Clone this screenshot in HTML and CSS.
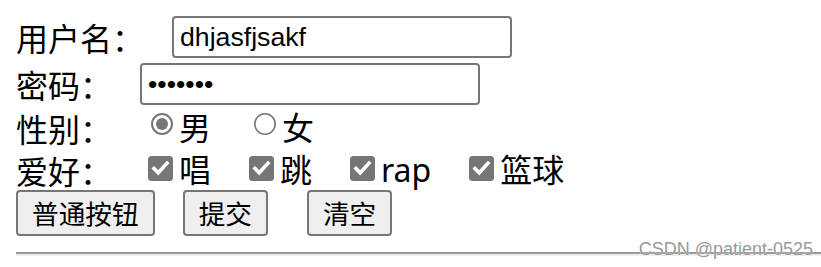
FILE: index.html
```
<!DOCTYPE html>
<html lang="zh-CN">
<head>
<meta charset="utf-8">
<title>表单</title>
<link rel="stylesheet" href="styles.css">
</head>
<body>
<form class="form">
  <div class="row">
    <span class="label">用户名：</span>
    <input class="text-input" type="text" value="dhjasfjsakf">
  </div>
  <div class="row row-pwd">
    <span class="label">密码：</span>
    <input class="text-input" type="password" value="1234567">
  </div>
  <div class="row row-radio">
    <span class="label">性别：</span>
    <label class="choice">
      <svg class="radio" viewBox="0 0 22 22" width="22" height="22"><circle cx="11" cy="11" r="10" fill="#fff" stroke="#767676" stroke-width="2"/><circle cx="11" cy="11" r="6" fill="#767676"/></svg>男
    </label>
    <label class="choice choice-next">
      <svg class="radio" viewBox="0 0 22 22" width="22" height="22"><circle cx="11" cy="11" r="10.2" fill="#fff" stroke="#767676" stroke-width="1.6"/></svg>女
    </label>
  </div>
  <div class="row row-check">
    <span class="label">爱好：</span>
    <label class="choice">
      <svg class="check" viewBox="0 0 25 25" width="25" height="25"><rect x="0" y="0" width="25" height="25" rx="3.5" fill="#767676"/><path d="M6 12.5 L10.2 16.8 L19 7.2" fill="none" stroke="#fff" stroke-width="3.6" stroke-linecap="square"/></svg>唱
    </label>
    <label class="choice choice-gap">
      <svg class="check" viewBox="0 0 25 25" width="25" height="25"><rect x="0" y="0" width="25" height="25" rx="3.5" fill="#767676"/><path d="M6 12.5 L10.2 16.8 L19 7.2" fill="none" stroke="#fff" stroke-width="3.6" stroke-linecap="square"/></svg>跳
    </label>
    <label class="choice choice-gap">
      <svg class="check" viewBox="0 0 25 25" width="25" height="25"><rect x="0" y="0" width="25" height="25" rx="3.5" fill="#767676"/><path d="M6 12.5 L10.2 16.8 L19 7.2" fill="none" stroke="#fff" stroke-width="3.6" stroke-linecap="square"/></svg>rap
    </label>
    <label class="choice choice-gap">
      <svg class="check" viewBox="0 0 25 25" width="25" height="25"><rect x="0" y="0" width="25" height="25" rx="3.5" fill="#767676"/><path d="M6 12.5 L10.2 16.8 L19 7.2" fill="none" stroke="#fff" stroke-width="3.6" stroke-linecap="square"/></svg>篮球
    </label>
  </div>
  <div class="row row-buttons">
    <button class="btn" type="button">普通按钮</button>
    <button class="btn btn-submit" type="button">提交</button>
    <button class="btn btn-reset" type="button">清空</button>
  </div>
</form>
<hr class="rule">
<div class="watermark">CSDN @patient-0525</div>
</body>
</html>
```
FILE: styles.css
```
html, body {
  background: #fff;
}
body {
  margin: 0;
  padding: 16px 0 0 16px;
  position: relative;
  font-family: "Noto Sans", "Noto Sans CJK SC", sans-serif;
  font-size: 32px;
  color: #000;
  height: 267px;
  box-sizing: border-box;
  overflow: hidden;
}
.form {
  margin: 0;
}
.row {
  display: flex;
  align-items: center;
  height: 42px;
  white-space: nowrap;
}
.label {
  font-family: "Noto Sans CJK SC", sans-serif;
  line-height: 42px;
  margin-right: 28px;
}
.row-pwd {
  margin-top: 5px;
}
.row-radio {
  margin-top: 2px;
}
.row-check {
  height: 41px;
}
.text-input {
  box-sizing: border-box;
  width: 340px;
  height: 42px;
  margin: 0;
  padding: 0 6px;
  border: 2px solid #767676;
  border-radius: 4px;
  background: #fff;
  color: #000;
  font-family: "Liberation Sans", sans-serif;
  font-size: 26.67px;
  outline: none;
}
.choice {
  display: flex;
  align-items: center;
  line-height: 42px;
}
.choice-next {
  margin-left: 32px;
}
.choice-gap {
  margin-left: 30px;
}
.radio {
  flex: none;
  margin: 0 6px 8px 11px;
}
.check {
  flex: none;
  margin: 0 6px 2px 8px;
}
.row-buttons {
  height: 46px;
}
.btn {
  box-sizing: border-box;
  height: 46px;
  margin: 0;
  padding: 0 14px;
  border: 2px solid #767676;
  border-radius: 4px;
  background: #efefef;
  color: #000;
  font-family: "Noto Sans CJK SC", sans-serif;
  font-size: 26.67px;
  line-height: 1;
}
.btn-submit {
  margin-left: 28px;
}
.btn-reset {
  margin-left: 39px;
}
.rule {
  margin: 16px 0 0 0;
  height: 0;
  border: none;
  border-top: 2px solid #9a9a9a;
  border-bottom: 2px solid #eeeeee;
}
.watermark {
  position: absolute;
  top: 239px;
  right: 8px;
  font-family: "Liberation Sans", sans-serif;
  font-size: 18px;
  line-height: 21px;
  color: #999;
  text-shadow: 0 0 1px #fff;
}
```
